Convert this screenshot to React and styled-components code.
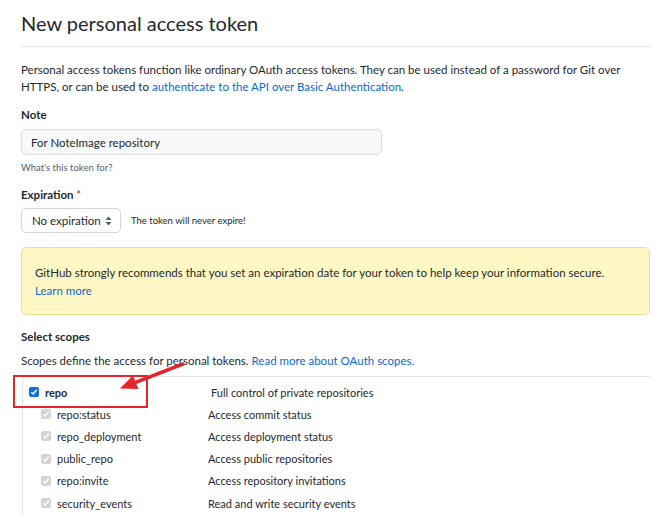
import React from 'react';
import styled, { createGlobalStyle } from 'styled-components';

const GlobalStyle = createGlobalStyle`
  body {
    margin: 0;
    background: #fff;
    font-family: Lato, "Noto Sans", sans-serif;
    color: #24292f;
  }
`

const Page = styled.div`
  position: relative;
  padding: 0 9px 0 21px;
  overflow: hidden;
  height: 528px;
`

const Title = styled.h1`
  margin: 0;
  padding-top: 8px;
  padding-bottom: 8px;
  font-size: 20px;
  font-weight: 400;
  line-height: 30px;
  border-bottom: 1px solid #e1e4e8;
`

const Lead = styled.p`
  margin: 15px 0 0;
  font-size: 11.5px;
  line-height: 16.5px;
`

const Link = styled.a`
  color: #0969da;
  text-decoration: none;
`

const Label = styled.div`
  margin-top: ${p => p.top}px;
  font-size: 11.5px;
  font-weight: 700;
  line-height: 16px;
`

const Required = styled.span`
  color: #cf222e;
  font-weight: 400;
`

const TextInput = styled.div`
  margin-top: 6px;
  width: 341px;
  height: 24px;
  padding: 0 9px;
  display: flex;
  align-items: center;
  background: #f6f8fa;
  border: 1px solid #d8dee4;
  border-radius: 5px;
  font-size: 11.5px;
`

const Hint = styled.div`
  margin-top: 7px;
  font-size: 9.5px;
  color: #57606a;
`

const ExpiryRow = styled.div`
  margin-top: 5px;
  display: flex;
  align-items: center;
  gap: 10px;
`

const Select = styled.div`
  width: 100px;
  height: 25px;
  box-sizing: border-box;
  padding: 0 8px 0 10px;
  display: flex;
  align-items: center;
  justify-content: space-between;
  white-space: nowrap;
  border: 1px solid #d0d7de;
  border-radius: 5px;
  font-size: 11.5px;
`

const Note = styled.span`
  font-size: 9.5px;
  color: #24292f;
`

const Flash = styled.div`
  margin-top: 14px;
  height: 68px;
  box-sizing: border-box;
  padding: 16px 13px 0;
  background: #fff8c5;
  border: 1px solid #f0dd8c;
  border-radius: 5px;
  font-size: 11.5px;
  line-height: 18px;
`

const ScopeText = styled.p`
  margin: 8px 0 0;
  font-size: 11.5px;
  line-height: 16px;
`

const ScopeBox = styled.div`
  margin-top: 7px;
  margin-left: 1px;
  border-top: 1px solid #e1e4e8;
  border-left: 1px solid #e1e4e8;
  border-top-left-radius: 5px;
  padding-top: 4px;
`

const Row = styled.div`
  display: grid;
  grid-template-columns: ${p => (p.main ? '182px 1fr' : '167px 1fr')};
  align-items: center;
  height: 22.2px;
  padding-left: ${p => (p.main ? 6 : 18)}px;
  font-size: 11px;
`

const Name = styled.label`
  display: flex;
  align-items: center;
  gap: 6px;
  font-weight: ${p => (p.main ? 700 : 400)};
`

const Box = styled.span`
  width: 10px;
  height: 10px;
  border-radius: 2px;
  display: inline-flex;
  align-items: center;
  justify-content: center;
  background: ${p => (p.main ? '#0b6fe0' : '#d4d4d4')};
  flex-shrink: 0;
`

const Highlight = styled.div`
  position: absolute;
  left: 13px;
  top: 375px;
  width: 131px;
  height: 29px;
  border: 2px solid #e5242b;
`

const Arrow = styled.svg`
  position: absolute;
  left: 110px;
  top: 355px;
`

const Check = () => (
  <svg width="8" height="8" viewBox="0 0 8 8">
    <path d="M1.3 4.2 L3.2 6 L6.8 1.8" fill="none" stroke="#fff" strokeWidth="1.5" />
  </svg>
)

const scopes = [
  ['repo:status', 'Access commit status'],
  ['repo_deployment', 'Access deployment status'],
  ['public_repo', 'Access public repositories'],
  ['repo:invite', 'Access repository invitations'],
  ['security_events', 'Read and write security events'],
]

export default function App() {
  return (
    <Page>
      <GlobalStyle />
      <Title>New personal access token</Title>
      <Lead>
        Personal access tokens function like ordinary OAuth access tokens. They can be used instead of a password for Git over HTTPS, or can be used to{' '}
        <Link>authenticate to the API over Basic Authentication</Link>.
      </Lead>
      <Label top={12}>Note</Label>
      <TextInput>For NoteImage repository</TextInput>
      <Hint>What's this token for?</Hint>
      <Label top={14}>Expiration <Required>*</Required></Label>
      <ExpiryRow>
        <Select>
          No expiration
          <svg width="7" height="10" viewBox="0 0 7 10">
            <path d="M3.5 0.5 L6.5 4 H0.5 Z M3.5 9.5 L6.5 6 H0.5 Z" fill="#57606a" />
          </svg>
        </Select>
        <Note>The token will never expire!</Note>
      </ExpiryRow>
      <Flash>
        GitHub strongly recommends that you set an expiration date for your token to help keep your information secure.
        <br />
        <Link>Learn more</Link>
      </Flash>
      <Label top={14}>Select scopes</Label>
      <ScopeText>
        Scopes define the access for personal tokens. <Link>Read more about OAuth scopes.</Link>
      </ScopeText>
      <ScopeBox>
        <Row main>
          <Name main><Box main><Check /></Box>repo</Name>
          <span>Full control of private repositories</span>
        </Row>
        {scopes.map(([name, desc]) => (
          <Row key={name}>
            <Name><Box><Check /></Box>{name}</Name>
            <span>{desc}</span>
          </Row>
        ))}
      </ScopeBox>
      <Highlight />
      <Arrow width="80" height="40" viewBox="0 0 80 40">
        <path d="M73 9 L25 27.6" stroke="#e5242b" strokeWidth="3.5" strokeLinecap="round" />
        <path d="M10 33.5 L23 20.5 L28.5 34 Z" fill="#e5242b" />
      </Arrow>
    </Page>
  );
}
